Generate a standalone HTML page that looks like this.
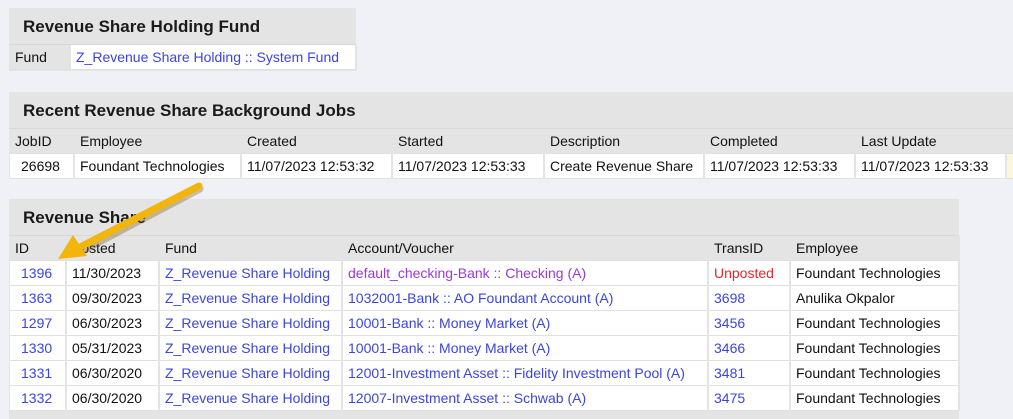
<!DOCTYPE html>
<html><head><meta charset="utf-8"><style>
body{margin:0;width:1013px;height:408px;background:#f0f1f6;font-family:"Liberation Sans","DejaVu Sans",sans-serif;font-size:14px;color:#111;overflow:hidden;position:relative}
.box{position:absolute;background:#e4e4e4}
.t{height:36px;line-height:37px;padding-left:14px;font-size:17px;font-weight:bold;color:#1a1a1a;border-bottom:1px solid #d8d8d8}
table{border-collapse:collapse;table-layout:fixed;margin-left:1px}
td{height:24px;padding:0 0 0 5px;white-space:nowrap;overflow:hidden;border-right:2px solid #e4e4e4;border-bottom:1px solid #e0e0e0}
tr.h td{background:#e4e4e4;height:24px}
tr.d td{background:#fff}
.b{color:#3b45e0}.p{color:#9a38dd}.r{color:#e8262a}
</style></head><body>
<div class="box" style="left:9px;top:8px;width:347px;height:63px">
<div class="t">Revenue Share Holding Fund</div>
<table style="width:346px"><col style="width:60px"><col style="width:286px">
<tr><td style="background:#e4e4e4">Fund</td><td style="background:#fff" class="b">Z_Revenue Share Holding :: System Fund</td></tr></table>
</div>
<div class="box" style="left:9px;top:92px;width:1010px;height:87px">
<div class="t">Recent Revenue Share Background Jobs</div>
<table style="width:1010px"><col style="width:64px"><col style="width:167px"><col style="width:151px"><col style="width:152px"><col style="width:160px"><col style="width:151px"><col style="width:151px"><col style="width:14px">
<tr class="h"><td>JobID</td><td>Employee</td><td>Created</td><td>Started</td><td>Description</td><td>Completed</td><td>Last Update</td><td></td></tr>
<tr class="d"><td style="padding-left:11px">26698</td><td>Foundant Technologies</td><td>11/07/2023 12:53:32</td><td>11/07/2023 12:53:33</td><td>Create Revenue Share</td><td>11/07/2023 12:53:33</td><td>11/07/2023 12:53:33</td><td style="background:#fbf7dc"></td></tr></table>
</div>
<div class="box" style="left:9px;top:199px;width:950px;height:220px">
<div class="t">Revenue Share</div>
<table style="width:949px"><col style="width:56px"><col style="width:93px"><col style="width:183px"><col style="width:366px"><col style="width:82px"><col style="width:169px">
<tr class="h"><td>ID</td><td>Posted</td><td>Fund</td><td>Account/Voucher</td><td>TransID</td><td>Employee</td></tr>
<tr class="d"><td class="b" style="padding-left:11px">1396</td><td>11/30/2023</td><td class="b">Z_Revenue Share Holding</td><td class="p">default_checking-Bank :: Checking (A)</td><td class="r">Unposted</td><td>Foundant Technologies</td></tr>
<tr class="d"><td class="b" style="padding-left:11px">1363</td><td>09/30/2023</td><td class="b">Z_Revenue Share Holding</td><td class="b">1032001-Bank :: AO Foundant Account (A)</td><td class="b">3698</td><td>Anulika Okpalor</td></tr>
<tr class="d"><td class="b" style="padding-left:11px">1297</td><td>06/30/2023</td><td class="b">Z_Revenue Share Holding</td><td class="b">10001-Bank :: Money Market (A)</td><td class="b">3456</td><td>Foundant Technologies</td></tr>
<tr class="d"><td class="b" style="padding-left:11px">1330</td><td>05/31/2023</td><td class="b">Z_Revenue Share Holding</td><td class="b">10001-Bank :: Money Market (A)</td><td class="b">3466</td><td>Foundant Technologies</td></tr>
<tr class="d"><td class="b" style="padding-left:11px">1331</td><td>06/30/2020</td><td class="b">Z_Revenue Share Holding</td><td class="b">12001-Investment Asset :: Fidelity Investment Pool (A)</td><td class="b">3481</td><td>Foundant Technologies</td></tr>
<tr class="d"><td class="b" style="padding-left:11px">1332</td><td>06/30/2020</td><td class="b">Z_Revenue Share Holding</td><td class="b">12007-Investment Asset :: Schwab (A)</td><td class="b">3475</td><td>Foundant Technologies</td></tr>
</table>
</div>
<svg style="position:absolute;left:0;top:0" width="1013" height="408">
<g stroke="#7a5a10" stroke-opacity="0.35" fill="none" stroke-width="7" stroke-linecap="round"><line x1="200" y1="189" x2="84" y2="250"/></g>
<line x1="199" y1="186" x2="82" y2="246" stroke="#f4b50b" stroke-width="7" stroke-linecap="round"/>
<polygon points="58,259 73,235 87,256" fill="#f4b50b"/>
</svg>
</body></html>
